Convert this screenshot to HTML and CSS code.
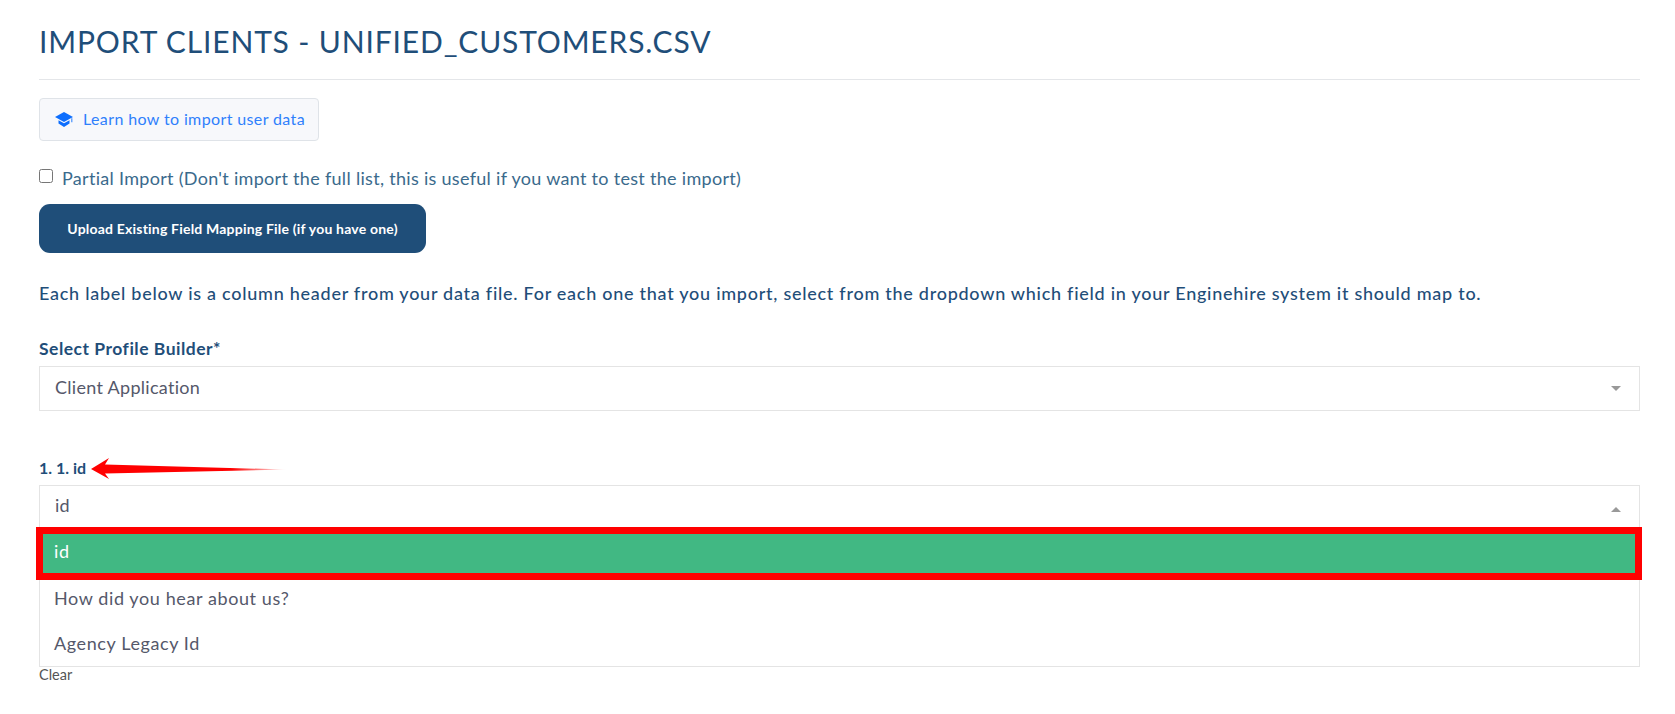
FILE: index.html
```html
<!DOCTYPE html>
<html lang="en">
<head>
    <meta charset="UTF-8">
    <meta name="viewport" content="width=device-width, initial-scale=1.0">
    <title>Import Clients</title>
    <link rel="stylesheet" href="styles.css">
</head>
<body>

    <h1 class="page-title">IMPORT CLIENTS - UNIFIED_CUSTOMERS.CSV</h1>

    <!-- Help link -->
    <a class="help-btn" href="#">
        <svg class="help-icon" viewBox="0 0 18 15" width="18" height="15">
            <path d="M9 0L18 5L9 10L0 5Z" fill="#0d6efd"/>
            <path d="M3.5 8.2L9 11.3L14.5 8.2V11.6L9 15L3.5 11.6Z" fill="#0d6efd"/>
            <path d="M16.4 6.2H17.3V10.2H16.4Z" fill="#0d6efd"/>
        </svg>
        <span class="help-text">Learn how to import user data</span>
    </a>

    <label class="partial">
        <input type="checkbox">
        Partial Import (Don't import the full list, this is useful if you want to test the import)
    </label>

    <button class="upload-btn">Upload Existing Field Mapping File (if you have one)</button>

    <p class="intro">Each label below is a column header from your data file. For each one that you import, select from the dropdown which field in your Enginehire system it should map to.</p>

    <!-- Profile builder -->
    <div class="field first-field">
        <div class="field-label">Select Profile Builder*</div>
        <div class="select-box">
            <span class="select-text">Client Application</span>
            <span class="caret caret-down"></span>
        </div>
    </div>

    <!-- Column mapping -->
    <div class="field map-field">
        <div class="field-label">
            1. 1. id
            <svg class="arrow" viewBox="0 0 196 22" width="196" height="22">
                <defs>
                    <linearGradient id="tail" x1="0" x2="1" y1="0" y2="0">
                        <stop offset="0" stop-color="#ff0000"/>
                        <stop offset="0.72" stop-color="#ff0000"/>
                        <stop offset="1" stop-color="#ff0000" stop-opacity="0"/>
                    </linearGradient>
                </defs>
                <path d="M0 11L18 0L14 6.5L196 11.5L14 15.5L18 21Z" fill="url(#tail)"/>
            </svg>
        </div>
        <div class="select-box open">
            <span class="select-text">id</span>
            <span class="caret caret-up"></span>
        </div>
        <ul class="options">
            <li class="option selected"><span class="select-text">id</span><span class="highlight"></span></li>
            <li class="option">How did you hear about us?</li>
            <li class="option">Agency Legacy Id</li>
        </ul>
        <a class="clear" href="#">Clear</a>
    </div>

</body>
</html>
```

FILE: styles.css
```css
html, body {
    height: 100%;
}

body {
    margin: 0;
    padding: 0 35px 0 39px;
    background-color: #fff;
    color: #1f4e79;
    font-family: "Lato", "Open Sans", sans-serif;
    overflow: hidden;
}

/* Heading */
.page-title {
    margin: 0;
    padding: 23px 0 10px;
    height: 46px;
    line-height: 36px;
    font-size: 30px;
    font-weight: 400;
    letter-spacing: 0.85px;
    color: #1f4e79;
    border-bottom: 1px solid #e4e6e9;
}

/* Help link */
.help-btn {
    display: flex;
    align-items: center;
    gap: 10px;
    box-sizing: border-box;
    width: 280px;
    height: 43px;
    margin-top: 18px;
    padding-left: 15px;
    background-color: #f7f8fb;
    border: 1px solid #dfe3e8;
    border-radius: 4px;
    color: #2f80fb;
    font-size: 16px;
    letter-spacing: 0.38px;
    text-decoration: none;
}

.help-icon {
    flex: none;
}

.help-text {
    padding-bottom: 2px;
}

/* Partial import */
.partial {
    display: flex;
    align-items: center;
    gap: 9px;
    height: 24px;
    margin-top: 25px;
    font-size: 18px;
    letter-spacing: 0.3px;
    color: #3a6a8c;
}

.partial input {
    width: 14px;
    height: 14px;
    margin: 0 0 4px;
}

.upload-btn {
    display: block;
    width: 387px;
    height: 49px;
    margin-top: 14px;
    background-color: #1f4e79;
    border: none;
    border-radius: 11px;
    color: #fff;
    font-family: inherit;
    font-size: 14px;
    font-weight: 700;
    letter-spacing: 0.2px;
}

.intro {
    margin: 28px 0 0;
    line-height: 24px;
    font-size: 18px;
    font-weight: 500;
    letter-spacing: 0.73px;
    color: #1f4e79;
}

/* Form fields */
.first-field {
    margin-top: 30px;
}

.map-field {
    margin-top: 43px;
}

.field-label {
    position: relative;
    height: 28px;
    margin-bottom: 3px;
    line-height: 28px;
    font-size: 17.5px;
    font-weight: 700;
    letter-spacing: 0.5px;
    color: #1f4e79;
}

.map-field .field-label {
    font-size: 16px;
    letter-spacing: 0;
}

.arrow {
    position: absolute;
    left: 52px;
    top: 4px;
}

.select-box {
    display: flex;
    align-items: center;
    justify-content: space-between;
    box-sizing: border-box;
    height: 45px;
    padding: 0 18px 0 15px;
    border: 1px solid #e4e4e4;
    font-size: 18px;
    letter-spacing: 0.3px;
    color: #55586a;
}

.select-box.open {
    height: 44px;
    border-bottom: none;
}

.select-text {
    padding-bottom: 3px;
}

.open .select-text {
    padding-bottom: 5px;
}

.caret {
    width: 0;
    height: 0;
    border-left: 5px solid transparent;
    border-right: 5px solid transparent;
}

.caret-down {
    border-top: 5px solid #999;
}

.caret-up {
    margin-top: 3px;
    border-bottom: 5px solid #999;
}

/* Dropdown */
.options {
    margin: 0;
    padding: 0;
    list-style: none;
    border: 1px solid #e4e4e4;
    border-top: none;
}

.option {
    display: flex;
    align-items: center;
    height: 45px;
    padding-left: 14px;
    font-size: 18px;
    letter-spacing: 0.6px;
    color: #55586a;
}

.option:last-child {
    height: 46px;
}

.option.selected {
    position: relative;
    height: 46px;
    background-color: #41b883;
    color: #fff;
}

/* Red annotation box */
.highlight {
    position: absolute;
    left: -4px;
    right: -3px;
    top: -2px;
    bottom: -5px;
    border: 7px solid #ff0000;
}

.clear {
    display: block;
    height: 16px;
    line-height: 16px;
    font-size: 14.5px;
    color: #555;
    text-decoration: none;
}
```
